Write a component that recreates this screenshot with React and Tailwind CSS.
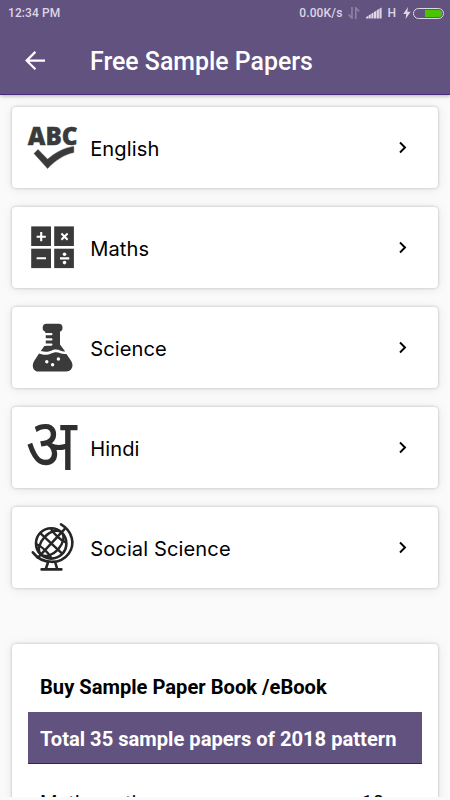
import React from 'react'

function EnglishIcon() {
  return (
    <svg className="w-[50px] h-[50px] shrink-0 overflow-visible" viewBox="0 0 50 50" fill="#3a3a3a" stroke="#3a3a3a" strokeWidth="0.4">
      <text x="0.8" y="23.4" fontSize="25.4" fontWeight="800" fontFamily="'Open Sans', 'Noto Sans', sans-serif" textLength="49.8" lengthAdjust="spacingAndGlyphs">ABC</text>
      <path d="M7 31.6 11 27.4 20.6 37.2C27 31.4 37 25.6 46.8 24.4V30.6C38 32.2 28 38.4 20.6 46.6Z" />
    </svg>
  )
}

function MathsIcon() {
  return (
    <svg className="w-[50px] h-[50px] shrink-0" viewBox="0 0 50 50">
      <g fill="#3a3a3a">
        <rect x="4.2" y="4.4" width="19.8" height="19.6" />
        <rect x="27.2" y="4.4" width="19.7" height="19.6" />
        <rect x="4.2" y="26.7" width="19.8" height="19.4" />
        <rect x="27.2" y="26.7" width="19.7" height="19.4" />
      </g>
      <g stroke="#fff" strokeWidth="2.1">
        <path d="M9.6 14.7h9.2M14.2 10.1v9.2M34.4 11.6l6.2 6.2M40.6 11.6l-6.2 6.2M9.6 36.2h9.4M33 36.4h9.2" />
      </g>
      <circle cx="37.5" cy="32.2" r="1.8" fill="#fff" />
      <circle cx="37.5" cy="40.6" r="1.8" fill="#fff" />
    </svg>
  )
}

function ScienceIcon() {
  return (
    <svg className="w-[50px] h-[50px] shrink-0" viewBox="0 0 50 50">
      <g fill="#3a3a3a">
        <rect x="15.7" y="1.8" width="19.8" height="8" rx="3.8" />
        <path d="M18.2 8H33V22.6L38.2 29.6C34 29.8 32.5 27.4 29 27.4 24 27.4 22.5 31.4 13.8 29L18.2 22.8Z" />
        <path d="M12 31.6C21.5 35 24.5 30.2 29 30.2 32.8 30.2 34.5 32.6 39.4 32L44.2 39C47.4 44.4 44.2 49.6 39 49.6H11.8C6.4 49.6 4.2 44.4 7 39.2Z" />
      </g>
      <path d="M18 12.2h6.4M18 17.4h6.4M18 22.6h6.4" stroke="#fff" strokeWidth="2.2" strokeLinecap="round" />
      <path d="M18 11v13" stroke="#fff" strokeWidth="1.4" />
      <circle cx="31.4" cy="37" r="1.7" fill="#fff" />
      <circle cx="19.8" cy="39.7" r="1.7" fill="#fff" />
      <circle cx="25.6" cy="42.8" r="1.7" fill="#fff" />
    </svg>
  )
}

function HindiIcon() {
  return (
    <svg className="w-[50px] h-[50px] shrink-0 overflow-visible" viewBox="0 0 50 50" fill="#2f2f2f">
      <text x="-1.4" y="48" fontSize="72" fontFamily="'Noto Sans Devanagari', 'Lohit Devanagari', FreeSans, 'Noto Sans', sans-serif" textLength="51" lengthAdjust="spacingAndGlyphs">अ</text>
    </svg>
  )
}

function SocialIcon() {
  return (
    <svg className="w-[50px] h-[50px] shrink-0" viewBox="0 0 50 50" fill="none" stroke="#262626" strokeWidth="2.6" strokeLinecap="round">
      <circle cx="24.2" cy="21.4" r="15.2" />
      <g strokeWidth="2.4" transform="rotate(43 24.2 21.4)">
        <path d="M24.2 1.5v39.6M9.2 21.4h30M14.4 10.8c5 2 14.6 2 19.6 0M14.4 32c5-2 14.6-2 19.6 0" />
        <ellipse cx="24.2" cy="21.4" rx="9.2" ry="15" />
      </g>
      <path d="M34 2.4C45.4 9 48.6 22 41.8 31.4 33.6 42.6 15.5 43 5.8 30.4" />
      <path d="M20.8 41 18.8 47M28.4 41 30.2 47M14.6 47.4H34.4" />
    </svg>
  )
}

const subjects = [
  { name: 'English', Icon: EnglishIcon },
  { name: 'Maths', Icon: MathsIcon },
  { name: 'Science', Icon: ScienceIcon },
  { name: 'Hindi', Icon: HindiIcon },
  { name: 'Social Science', Icon: SocialIcon },
]

function StatusBar() {
  return (
    <div className="h-[26px] flex items-center justify-between pl-2 pr-[6px] text-[12px] font-medium text-[#dcd6e5]">
      <span className="tracking-[0.1px]">12:34 PM</span>
      <div className="flex items-center">
        <span className="mr-[6px] tracking-[0.15px]">0.00K/s</span>
        <svg className="w-[12px] h-[12px] mr-[6px]" viewBox="0 0 12 12" fill="none" stroke="#8f83a5" strokeWidth="1.6">
          <path d="M4 0v11L.6 7.6M7.8 12V1l3.4 3.4" />
        </svg>
        <svg className="w-[16px] h-[12px] mr-[5px]" viewBox="0 0 16 12" fill="#dcd6e5">
          <path d="M0 11.6v-1.4l2.2-1.4v2.8zM2.6 11.6V8.4l2.2-1.3v4.5zM5.3 11.6V6.8l2.2-1.3v6.1zM8 11.6V5l2.2-1.3v7.9zM10.7 11.6V3.3L12.9 2v9.6zM13.4 11.6V1.7L15.6.4v11.2z" />
        </svg>
        <span className="mr-[7px]">H</span>
        <svg className="w-[8px] h-[12px] mr-[2px]" viewBox="0 0 8 12" fill="#dcd6e5">
          <path d="M5 0 .2 7h3L2.6 12 7.6 4.8H4.4z" />
        </svg>
        <div className="w-[31px] h-[11px] rounded-full border border-[#dcd6e5] p-px flex justify-end">
          <div className="w-[17px] h-full bg-[#48c400] rounded-r-full"></div>
        </div>
      </div>
    </div>
  )
}

function SubjectCard({ name, Icon }) {
  return (
    <div className="h-[81px] pb-px flex items-center bg-white rounded-[4px] pl-[15px] pr-[29px] shadow-[0_0_3px_rgba(0,0,0,0.25),0_1px_12px_rgba(0,0,0,0.08)]">
      <Icon />
      <span className="ml-[13.2px] flex-1 pt-[3px] font-[Inter,sans-serif] text-[20.1px] leading-6 tracking-[0.1px] text-black">{name}</span>
      <svg className="w-[12px] h-[14px]" viewBox="0 0 12 14" fill="none" stroke="#000" strokeWidth="1.9">
        <path d="M3 2.5 8 7.5 3 12.5" />
      </svg>
    </div>
  )
}

function App() {
  return (
    <div className="w-[450px] h-[800px] overflow-hidden bg-[#fafafa] font-[Roboto,sans-serif] flex flex-col">
      {/* Header */}
      <header className="relative h-[95px] shrink-0 bg-[#62527f] border-b border-[#4b2a7d] shadow-[0_1px_4px_rgba(0,0,0,0.3)]">
        <StatusBar />
        <div className="h-[69px] flex items-center pl-[25px]">
          <svg className="w-[20px] h-[20px]" viewBox="0 0 20 20" fill="none" stroke="#fff" strokeWidth="2.2">
            <path d="M20 9.6H1.6M10.4 .9 1.6 9.6l8.8 8.7" />
          </svg>
          <h1 className="ml-[45px] pt-[2px] text-[24.9px] font-medium text-white leading-8">Free Sample Papers</h1>
        </div>
      </header>

      <div className="h-[702px] shrink-0 overflow-hidden px-3 pt-[12px]">
        <div className="flex flex-col gap-[19px]">
          {subjects.map((el) => (
            <SubjectCard key={el.name} name={el.name} Icon={el.Icon} />
          ))}
        </div>

        {/* Book offer */}
        <div className="mt-[56px] h-[220px] bg-white rounded-[4px] px-4 pt-[31px] shadow-[0_0_3px_rgba(0,0,0,0.25),0_1px_12px_rgba(0,0,0,0.08)]">
          <h2 className="px-3 text-[20.15px] leading-6 font-bold text-black">Buy Sample Paper Book /eBook</h2>
          <div className="mt-[13px] h-[52px] px-3 pt-[3px] flex items-center bg-[#62527f] border-b border-[#3d1d6b] text-[20.15px] font-bold text-white">
            Total 35 sample papers of 2018 pattern
          </div>
          <div className="mt-[27px] px-3 flex justify-between text-[20px] leading-6 text-black">
            <span>Mathematics</span>
            <span className="mr-[26px]">10</span>
          </div>
        </div>
      </div>
    </div>
  )
}

export default App
